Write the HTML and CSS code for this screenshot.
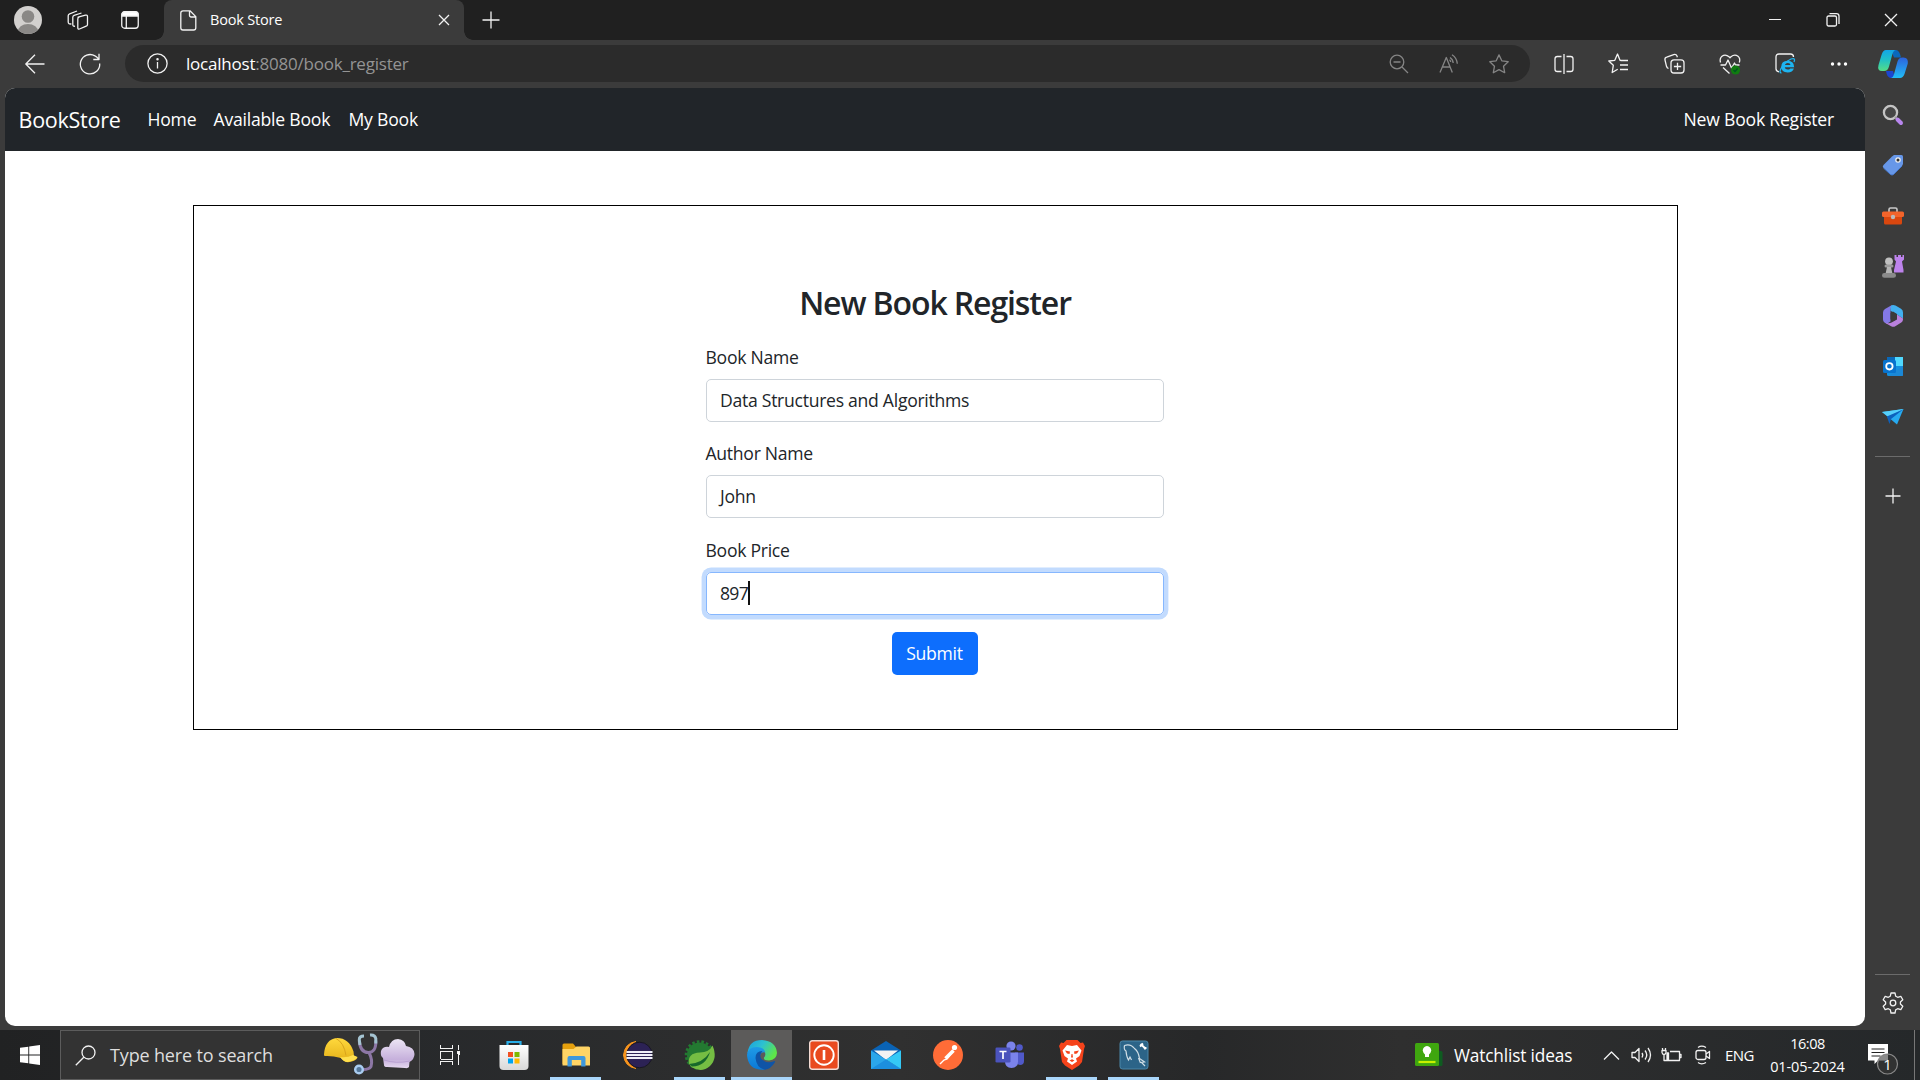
FILE: index.html
```html
<!DOCTYPE html>
<html lang="en">
<head>
<meta charset="utf-8">
<title>Book Store</title>
<link rel="stylesheet" href="styles.css">
</head>
<body>
<div class="desktop">
  <header class="tabstrip">
    <div class="strip-tools">
      <svg class="ico" width="28" height="28" viewBox="0 0 28 28"><defs><clipPath id="av"><circle cx="14" cy="14" r="14"/></clipPath></defs><g clip-path="url(#av)"><rect width="28" height="28" fill="#d2d0ce"/><circle cx="14" cy="10.5" r="6.3" fill="#8a8886"/><ellipse cx="14" cy="26" rx="10.3" ry="8" fill="#8a8886"/></g></svg>
      <svg class="ico line" width="22" height="22" viewBox="0 0 22 22"><path d="M11 8.200l7.500-2q2-.5 2 1.500v7.800q0 1.300-1.300 1.700l-6.700 2.800q-1.700.5-1.700-1.300v-8.700q0-1.400 1.200-1.800zM8 17.200q-2.200.4-2.200-1.500V8.300q0-1.500 1.300-2L14.500 4M4.400 14.900q-3.200.5-3.200-1.800V6.800q0-1.500 1.400-2L10 2"/></svg>
      <svg class="ico line" width="18" height="18" viewBox="0 0 18 18"><rect x=".75" y=".75" width="16.500" height="16.500" rx="3"/><path d="M1 3.500Q1 .8 4 .8h10q3 0 3 2.700V5H1z" fill="#fff"/><path d="M5.300 5v12"/></svg>
    </div>
    <div class="tab">
      <svg width="17" height="21" viewBox="0 0 17 21" class="line"><path d="M3 .8h7l5.800 5.800v11.200q0 2.200-2.200 2.200H3q-2.200 0-2.200-2.200V3Q.8.800 3 .8zM9.500 1v4.300q0 1.700 1.700 1.700h4.500"/></svg>
      <span class="tab-title">Book Store</span>
      <svg width="12" height="12" viewBox="0 0 12 12" class="line"><path d="M1 1l10 10M11 1L1 11"/></svg>
    </div>
    <svg class="newtab line" width="18" height="18" viewBox="0 0 18 18"><path d="M9 .5v17M.5 9h17"/></svg>
    <div class="window-controls">
      <svg width="14" height="14" viewBox="0 0 14 14" class="line sharp"><path d="M1 6.500h12"/></svg>
      <svg width="14" height="14" viewBox="0 0 14 14" class="line"><rect x="1" y="3" width="9.500" height="10" rx="1.500"/><path d="M3.500 .6h7q2.500 0 2.500 2.500V11"/></svg>
      <svg width="14" height="14" viewBox="0 0 14 14" class="line"><path d="M1 1l12 12M13 1L1 13"/></svg>
    </div>
  </header>

  <div class="toolbar">
    <svg class="nav-ico line" width="20" height="20" viewBox="0 0 20 20"><path d="M19.500 10H.8M10 .8L.8 10l9.200 9.200"/></svg>
    <svg class="nav-ico line" width="22" height="22" viewBox="0 0 22 22"><path d="M20.700 10.500A9.700 9.700 0 1 1 16 2.900q2 1 3.800 3.300M20 .800v5.700h-5.700"/></svg>
    <div class="address">
      <svg class="line" width="21" height="21" viewBox="0 0 21 21"><circle cx="10.500" cy="10.500" r="9.600"/><path d="M10.500 9v6.500"/><circle cx="10.500" cy="6.300" r=".6" fill="#fff"/></svg>
      <span class="url"><b>localhost</b>:8080/book_register</span>
      <div class="address-tools">
        <svg class="line dim" width="20" height="20" viewBox="0 0 20 20"><circle cx="8" cy="8" r="6.800"/><path d="M13 13l6 6M4.500 8h7"/></svg>
        <svg class="line dim" width="20" height="20" viewBox="0 0 20 20"><path d="M1 18.500L7.300 3.500l6 15M3.300 13h8M11 3.500q3 2 3.200 5.500M13 .8q4.800 3 5.300 9M10.500 5.800q1 .8 1.200 2.200"/></svg>
        <svg class="line dim" width="20" height="20" viewBox="0 0 20 20"><path d="M10 .9l2.800 5.900 6.400.9-4.700 4.500 1.200 6.500L10 15.600l-5.700 3.100 1.200-6.500L.8 7.700l6.400-.9z"/></svg>
      </div>
    </div>
    <div class="browser-tools">
      <svg class="line" width="20" height="20" viewBox="0 0 20 20"><path d="M7.500 2.500H3.300Q1 2.500 1 4.800v10.400q0 2.300 2.300 2.300h4.200M12.500 2.500h4.200q2.300 0 2.300 2.300v10.400q0 2.300-2.300 2.300h-4.200M10 0v20"/></svg>
      <svg class="line" width="21" height="21" viewBox="0 0 21 21"><path d="M13.300 7.500L12 7.300 9.500 1 6.800 7.300.8 8l4.500 4.300L4.200 19.500l5.500-3.200M13 7.500h7M12 12h8M12 16.500h8"/></svg>
      <svg class="line" width="21" height="21" viewBox="0 0 21 21"><rect x="7" y="6.800" width="13" height="13.200" rx="3"/><path d="M13.500 9.800v7.300M9.900 13.500h7.300M4.500 15.500q-1.500-.5-2-2.200L1 7q-.5-2.200 1.700-2.900l7-2.500q2.500-.6 3.300 1.500l.4 1.200"/></svg>
      <svg class="line" width="22" height="22" viewBox="0 0 22 22"><path d="M1.500 9.500Q.3 5.500 3 3.200q3.500-2.500 7 .6l1 1 1-1q3.500-3 7-.6 2.700 2.300 1.300 6.300M1.500 12h5l2.500-5 3.500 8 3-5 1 2h4M4 14.500l6.500 6"/><circle cx="16.500" cy="17" r="4.600" fill="#107c10" stroke="none"/><path d="M14.500 17l1.500 1.500 2.600-3" stroke="#052"/></svg>
      <svg width="21" height="21" viewBox="0 0 21 21"><path d="M4 18.800q-3-.4-3-3V4q0-3 3-3h11.500q3 0 3 3" class="line"/><path d="M19.200 14.300h-9.400q.3 2.300 2.800 2.300 1.800 0 2.600-1.200h3.700q-1.300 4-6.300 4-6.300 0-6.300-5.700 0-6 6.300-6 6.600 0 6.600 6.600zm-9.300-2.400h5.600q-.2-1.900-2.700-1.900-2.400 0-2.900 1.900z" fill="#1eb4f0"/><path d="M6.500 19.800Q3.800 20 6 15.500q3-6 10-9.500 5-1.500 3 3" fill="none" stroke="#1eb4f0" stroke-width="1.300"/></svg>
      <svg width="18" height="4" viewBox="0 0 18 4"><g fill="#fff"><circle cx="2.500" cy="2" r="1.700"/><circle cx="9" cy="2" r="1.700"/><circle cx="15.500" cy="2" r="1.700"/></g></svg>
    </div>
    <svg class="copilot" width="30" height="28" viewBox="0 0 30 28"><defs><linearGradient id="c1" x1="0" y1="0" x2="0" y2="1"><stop offset="0" stop-color="#13a5e8"/><stop offset=".45" stop-color="#1fbfc8"/><stop offset="1" stop-color="#55dd86"/></linearGradient><linearGradient id="c2" x1="0" y1="0" x2="0" y2="1"><stop offset="0" stop-color="#2c62dd"/><stop offset="1" stop-color="#22bdf5"/></linearGradient></defs><path d="M13 0h5q3.500 0 5 7.500h-7z" fill="#0a68bc"/><path d="M8 21h7l2 7h-4q-4 0-5-7z" fill="#1b46cf"/><path d="M8 0h10q-2.500 0-3.700 4.500L11 16.500Q9.800 21 6 21H4q-5 0-3.500-6L3.500 5Q5 0 8 0z" fill="url(#c1)"/><path d="M22 28H12.500q2.500 0 3.700-4.500l3.300-12q1.200-4 5-4h1q5 0 4.300 6L26.500 24q-1.500 4-4.500 4z" fill="url(#c2)"/></svg>
  </div>

  <div class="middle">
    <main class="page">
      <nav class="navbar">
        <a class="brand">BookStore</a>
        <div class="links"><a class="l-home">Home</a><a class="l-avail">Available Book</a><a class="l-my">My Book</a></div>
        <a class="l-new">New Book Register</a>
      </nav>
      <section class="card">
        <h2 class="title">New Book Register</h2>
        <form class="form">
          <div class="field"><label>Book Name</label><div class="input">Data Structures and Algorithms</div></div>
          <div class="field"><label>Author Name</label><div class="input">John</div></div>
          <div class="field"><label>Book Price</label><div class="input focus">897<i class="caret"></i></div></div>
          <div class="submit">Submit</div>
        </form>
      </section>
    </main>

    <aside class="sidebar">
      <div class="apps">
        <svg width="22" height="22" viewBox="0 0 22 22"><circle cx="8.500" cy="8.500" r="6.600" fill="#454545" stroke="#c4c4c4" stroke-width="2.300"/><path d="M13 13l2 2" stroke="#999" stroke-width="2"/><path d="M15.500 15.500l3.500 3.500" stroke="#b886ee" stroke-width="4" stroke-linecap="round"/></svg>
        <svg width="22" height="22" viewBox="0 0 22 22"><path d="M10 2.500L12 1h7.500Q21 1 21 2.500V10l-1 2-8.500 8.500q-1.500 1-3 0L1.500 14q-1.500-1.500 0-3z" fill="#6797e8"/><path d="M1.500 14l7 6.500q1.500 1 3 0L20 12" fill="none" stroke="#4779cd" stroke-width="1"/><circle cx="16" cy="6" r="2.800" fill="#eee"/><circle cx="16" cy="6" r="1.500" fill="#333"/></svg>
        <svg width="22" height="22" viewBox="0 0 22 22"><path d="M7 7V4.500Q7 3 8.500 3h5Q15 3 15 4.500V7" fill="none" stroke="#c9c9c9" stroke-width="1.600"/><path d="M2 10h18v8q0 1.500-1.500 1.500h-15Q2 19.500 2 18z" fill="#d9470f"/><rect y="6.500" width="22" height="5.500" rx="1.500" fill="#f2642b"/><circle cx="11" cy="12" r="2.200" fill="#bbb"/></svg>
        <svg width="22" height="23" viewBox="0 0 22 23"><path d="M12.500 0h2v2h1.500V0h3v2h1.500V0h1.500v4.500L20 6.500 21.500 15v2.500H12V15l2-8.500-1.500-2z" fill="#bd83ec"/><circle cx="7" cy="6.300" r="3.900" fill="#bfbfbf"/><rect x="2.500" y="9.500" width="9" height="3" rx="1.500" fill="#9a9a9a"/><path d="M5 12h4l1.500 7h-7z" fill="#b4b4b4"/><rect y="18" width="14" height="4.800" rx="2.400" fill="#8a8a8a"/></svg>
        <svg width="22" height="22" viewBox="0 0 22 22"><path d="M10 0L3 4Q1 5.200 1 7.500v7q0 2 1.500 3L5 18.800l3.500-2.300V5.500Q8.500 2 10 0z" fill="#8479e6"/><path d="M9.500 .3q2-.8 4 .3l5.500 3.200q2 1.200 2 3.700v6l-6-4-6.500-3.800Q8 2 9.500 .3z" fill="#42b0f0"/><path d="M15 9.500l6 4v1q0 2-1.700 3l-6 3.700q-2 1.200-4.200 0L2.500 17.500q6 1.500 8-.5l4.500-2.500z" fill="#b981dd"/><path d="M8.500 8l2.500-1.500L15 9v4.500L11.500 16l-3-1.800z" fill="#3b3b3b"/></svg>
        <svg width="22" height="21" viewBox="0 0 22 21"><rect x="5" y="1" width="16" height="19" rx="1.500" fill="#1490df"/><path d="M12 1h9v9h-9z" fill="#50d9ff"/><path d="M5 1h8v5H5z" fill="#0a68b8"/><path d="M12 16l9-6v9q0 1-1 1H7z" fill="#1b88d6"/><rect x="1" y="4" width="13" height="13" rx="1.500" fill="#0873ce"/><circle cx="7.400" cy="10.300" r="3.200" fill="none" stroke="#fff" stroke-width="1.800"/></svg>
        <svg width="22" height="18" viewBox="0 0 22 18"><path d="M0 4L21.500 1 15 16.500z" fill="#27aaf0"/><path d="M0 4L21.500 1 6.500 9z" fill="#56d0fb"/><path d="M4.800 8.500L21 1.500 9 11l-1.500 5z" fill="#0d61bd"/></svg>
      </div>
      <hr class="rule">
      <svg class="plus line" width="16" height="16" viewBox="0 0 16 16"><path d="M8 .5v15M.5 8h15"/></svg>
      <hr class="rule low">
      <svg class="gear line" width="22" height="22" viewBox="0 0 22 22"><circle cx="11" cy="11" r="2.800"/><path d="M9 1h4l.7 3.200 2 1.100 3.100-1 2 3.500-2.400 2.200v2l2.400 2.200-2 3.500-3.100-1-2 1.100L13 21H9l-.7-3.200-2-1.100-3.100 1-2-3.500L3.600 12v-2L1.200 7.800l2-3.500 3.100 1 2-1.100z"/></svg>
    </aside>
  </div>

  <footer class="taskbar">
    <div class="start"><svg width="20" height="20" viewBox="0 0 20 20"><path d="M0 2.800L8.300 1.700v7.800H0zM9.200 1.500L20 0v9.500H9.200zM0 10.400h8.300v7.900L0 17.200zM9.200 10.400H20V20L9.200 18.400z" fill="#fff"/></svg></div>
    <div class="search">
      <svg class="line" width="21" height="21" viewBox="0 0 21 21"><circle cx="13.500" cy="7.500" r="6.500"/><path d="M8.800 12.200L.8 20.200"/></svg>
      <span class="search-text">Type here to search</span>
      <svg class="art" width="92" height="42" viewBox="0 0 92 42"><defs><linearGradient id="h" x1="0" y1="0" x2="0" y2="1"><stop offset="0" stop-color="#ffd93d"/><stop offset="1" stop-color="#e4b018"/></linearGradient><linearGradient id="ch" x1="0" y1="0" x2="0" y2="1"><stop offset="0" stop-color="#ece5f4"/><stop offset=".7" stop-color="#c6b0dc"/><stop offset="1" stop-color="#e6d8f0"/></linearGradient></defs>
        <path d="M1 20.500Q2 5 14 4q12 0 16.500 13.500L31 22l3.500 1.500q-1 3-8 4.500-5 1-8.500-4Q9 21.500 2 22q-1.500-.500-1-1.500z" fill="url(#h)"/><path d="M13 4.500q8 4 10 17" fill="none" stroke="#d9a41c" stroke-width="1"/><path d="M17 23q7 1 13-2l4.500 2q-2 4-10 5-4 0-7.500-5z" fill="#ffe04f"/>
        <path d="M36.300 7q1 11.500 9 11.500t7.500-12M46 18.500q4 8 2 14-2 3.500-10 3" fill="none" stroke="#8d77a6" stroke-width="3"/><path d="M41 2q-5 0-4.700 4l.7 5M47 1q5-.5 5.800 3.500v5" fill="none" stroke="#a5c4d2" stroke-width="3"/><circle cx="36" cy="35.500" r="3.800" fill="#54779a" stroke="#a9ccf0" stroke-width="2.500"/>
        <path d="M61 31l-1-7q-3-2-2-7 2-5 8-4 2-8 9-8 7 1 8 7 8 1 8.500 8 0 5-5 8l-.5 5q-1 1.500-4 1l-18-1q-3 0-3-2z" fill="url(#ch)"/><path d="M61 26q12 4 26 1" fill="none" stroke="#b49ccf" stroke-width=".9"/></svg>
    </div>
    <div class="task"><svg class="line sharp" width="20" height="20" viewBox="0 0 20 20"><path d="M.5 0v3.500h12V0M.5 20v-3.500h12V20M.5 6h12v8H.5zM18.500 0v5M18.500 10v10"/><rect x="17.500" y="6" width="2" height="3" fill="#fff"/></svg></div>
    <div class="apps-row">
      <div class="app"><svg width="30" height="30" viewBox="0 0 30 30"><defs><linearGradient id="st" x1="0" y1="0" x2="0" y2="1"><stop offset="0" stop-color="#fff"/><stop offset="1" stop-color="#d8d8d8"/></linearGradient></defs><path d="M8.500 7V2h13v5" fill="none" stroke="#2aaee8" stroke-width="2.200"/><path d="M.5 5h29v21q0 4-4 4h-21q-4 0-4-4z" fill="url(#st)"/><path d="M9 12h5v5H9z" fill="#f25022"/><path d="M15.500 12h5v5h-5z" fill="#7fba00"/><path d="M9 18.500h5v5H9z" fill="#00a4ef"/><path d="M15.500 18.500h5v5h-5z" fill="#ffb900"/></svg></div>
      <div class="app open"><svg width="30" height="30" viewBox="0 0 30 30"><path d="M1.500 5Q1.500 3.500 3 3.500h9l3 3.500h12q2 0 2 2v15H1.500z" fill="#e5a00d"/><path d="M1.500 9h11l3-2.500h12q1.500 0 1.500 1.500v17.500H1.500z" fill="#ffd465"/><path d="M6.500 26.500V18q0-2 2-2h14q2 0 2 2v8.500h-4.300V20h-9.400v6.500z" fill="#3f98dc"/></svg></div>
      <div class="app"><svg width="31" height="30" viewBox="0 0 31 30"><path d="M14 1.500Q3 3 1.500 15 2.500 26.500 14 28.500 6 25 5 15q1-10 9-13.500z" fill="#f8951d" stroke="#f8951d"/><circle cx="17.500" cy="15" r="12.800" fill="#2c2255" stroke="#191722"/><path d="M4.500 12h26M4.500 15h26M4.500 18h26" stroke="#eeeef7" stroke-width="1.900"/></svg></div>
      <div class="app open"><svg width="30" height="30" viewBox="0 0 30 30"><circle cx="14.500" cy="15" r="12.600" fill="#237a31"/><circle cx="14.500" cy="15" r="13.500" fill="none" stroke="#237a31" stroke-width="2.600" stroke-dasharray="2.600 2.050"/><path d="M27.500 5.500Q33 18 25 26q-8 7-18 1.500L4 24Q2 13 15 12.500q9 0 12.500-7z" fill="#75bd43"/><path d="M4 24q14-1 21-12-4 14-18 14.500z" fill="#17682b"/></svg></div>
      <div class="app open active"><svg width="30" height="30" viewBox="0 0 30 30"><defs><linearGradient id="e1" x1="0" y1="0" x2="1" y2=".5"><stop offset="0" stop-color="#1a9fe0"/><stop offset=".5" stop-color="#2dc1d0"/><stop offset="1" stop-color="#5ee648"/></linearGradient><linearGradient id="e2" x1="0" y1="0" x2="0" y2="1"><stop offset="0" stop-color="#1f9be6"/><stop offset="1" stop-color="#0b78d6"/></linearGradient></defs><path d="M.5 13Q2 0 15 0q14 1 15 13-.5 7-8 7.500-6 0-5-3 2-2 1-5-2-4-9-4-6 1-8.500 4.500z" fill="url(#e1)"/><path d="M0 15q1-8 9.500-8 7.500 0 8.800 5.500-4-1-5.300 3-2 8 5 14.200Q1 31 0 15z" fill="url(#e2)"/><path d="M8.500 18q0-7 7-7-4 5-.5 8.500Q20 24 27.500 21q1 0 .3 1.500-4 6.500-9.800 7.200Q9.500 28 8.500 18z" fill="#0f54a6"/></svg></div>
      <div class="app"><svg width="30" height="30" viewBox="0 0 30 30"><rect x=".7" y=".7" width="28.600" height="28.600" rx="2.500" fill="#e94a1f" stroke="#f4dcd5" stroke-width="1.400"/><circle cx="15" cy="15" r="9.700" fill="none" stroke="#fff" stroke-width="1.900"/><path d="M15 10v10" stroke="#fff" stroke-width="2.600"/></svg></div>
      <div class="app"><svg width="30" height="30" viewBox="0 0 30 30"><path d="M0 10.500L15 1l15 9.500v9H0z" fill="#0a63b5"/><path d="M3 10.500h24L15 20z" fill="#f3f3f3"/><path d="M0 10.500l30 18V29H0z" fill="#2ba6ea"/><path d="M30 10.500L15 19.500 30 29z" fill="#35c9f5"/><path d="M0 29l15-9.500L30 29z" fill="#1c8fdf"/></svg></div>
      <div class="app"><svg width="30" height="30" viewBox="0 0 30 30"><circle cx="15" cy="15" r="15" fill="#ff6c37"/><circle cx="21.500" cy="7.500" r="2.600" fill="#fff"/><path d="M20.500 11l-6.500 8-3 1-4 4" fill="none" stroke="#fff" stroke-width="1.400"/><path d="M20.500 10.500l-8 8" stroke="#fff" stroke-width="3.600"/></svg></div>
      <div class="app"><svg width="30" height="30" viewBox="0 0 30 30"><circle cx="24.500" cy="7.500" r="3.300" fill="#5059c9"/><path d="M20 12.500h9v8.500q0 4-4 4-5-1-5-4z" fill="#5059c9"/><circle cx="16" cy="6" r="4.600" fill="#7b83eb"/><path d="M10 12.500h13v9q0 6.500-6.500 6.500T10 21.500z" fill="#7b83eb"/><rect x=".5" y="7.500" width="15" height="15" rx="1.300" fill="#4b53bc"/><path d="M4.500 11.500h7M8 11.500V19" stroke="#fff" stroke-width="1.700"/></svg></div>
      <div class="app open"><svg width="30" height="30" viewBox="0 0 30 30"><path d="M9.500 0h11l3 3 2.500-.5L28 6l-1 3-2 13-3 3.500-7 4.500-7-4.500L5 22 3 9 2 6l2-3.500L6.500 3z" fill="#f5431b"/><path d="M10 5l5 1 5-1 4.500 5.500-2 5.500-3.500 2.500 1 3L15 25l-5-3.500 1-3L7.500 16l-2-5.500z" fill="#fff"/><path d="M8 10.500l5 1-.5 2.500-2.500-.5zM22 10.500l-5 1 .5 2.500 2.500-.5zM12.500 20.500l2.500-1.300 2.500 1.300L15 22zM14.500 14h1l.5 3.500h-2z" fill="#f5431b"/></svg></div>
      <div class="app open"><svg width="30" height="30" viewBox="0 0 30 30"><rect x="1" y="1" width="28" height="28" rx="2.500" fill="#2c6488" stroke="#4b87a9"/><path d="M5.500 5.500q6-2 10 3 4 3 5 10l5 3.500-3 .5 3.500 3.500M5.500 5.500q-1 4 1.500 5.500.500 6 2.500 9l1.500-3 1.500 3M19.500 18l2 5" fill="none" stroke="#cfdde5" stroke-width="1.200"/><path d="M21.500 4l5.500 5M21 6.500l3-3M25 9l2.500-1.500" stroke="#fff" stroke-width="1.900"/></svg></div>
    </div>
    <div class="tray">
      <svg class="watch-ico" width="28" height="24" viewBox="0 0 28 24"><rect x="14" y="8" width="13.500" height="15" rx="1.500" fill="#0e5c20"/><rect x="0" y="0" width="24" height="23" rx="1.500" fill="#3fa60f"/><path d="M12 3q-4 .5-4.300 4.500.3 2 2.300 4V14h4v-2.500q2-2 2.300-4Q16 3.500 12 3z" fill="#fff"/><path d="M3.500 19h17" stroke="#c8f000" stroke-width="2.200"/></svg>
      <span class="watch">Watchlist ideas</span>
      <svg class="t1 line" width="17" height="17" viewBox="0 0 17 17"><path d="M1 12.500L8.500 5l7.500 7.500"/></svg>
      <svg class="t2 line" width="21" height="18" viewBox="0 0 21 18"><path d="M1 6.500h3l4-4v13l-4-4H1zM11 7q1.500 2 0 4.500M14 4.500q3.500 4.500 0 9M17 2q5 7 0 14"/></svg>
      <svg class="t3 line" width="21" height="16" viewBox="0 0 21 16"><path d="M5 13.500h13.500V4.500H9M18.500 7.500H20v3h-1.500M3 8v5.500h4M1.500 1v2M4.500 1v2M1 3.500h4v2q-.3 2-2 2t-2-2z"/><path d="M6 6h1.500v7H6z" fill="#fff"/></svg>
      <svg class="t4 line" width="16" height="20" viewBox="0 0 16 20"><rect x="1" y="5.500" width="10" height="9" rx="2"/><path d="M11 9l3.500-2.500v7L11 11M3 2.500q3.500-2.700 8 0M3 17.500q3.500 2.700 8 0"/></svg>
      <span class="lang">ENG</span>
      <div class="clock"><span class="time">16:08</span><span class="date">01-05-2024</span></div>
      <svg class="notif" width="31" height="32" viewBox="0 0 31 32"><path d="M0 0h20v16.500H10L6.500 20v-3.500H0z" fill="#fff"/><path d="M3.500 5h13M3.500 8.500h13M3.500 12h9" stroke="#222" stroke-width="1.200"/><circle cx="19.500" cy="20" r="10" fill="#333" fill-opacity=".9" stroke="#8a8a8a" stroke-width="1.200"/><path d="M10 18q2-8 10-7.500v6H11z" fill="#8a8a8a"/><text x="19.500" y="25.500" text-anchor="middle" class="badge">1</text></svg>
      <div class="show-desktop"></div>
    </div>
  </footer>
</div>
</body>
</html>
```
FILE: styles.css
```css
* { box-sizing: border-box; }
body { margin: 0; font-family: "Open Sans", "Noto Sans", sans-serif; color: #fff; background: #3b3b3b; overflow: hidden; }
svg { display: block; flex: none; overflow: visible; }
span, a, label { white-space: nowrap; }
.line { fill: none; stroke: #f2f2f2; stroke-width: 1.3; stroke-linejoin: round; }
.dim { stroke: #858585; }
.sharp { stroke-width: 1; shape-rendering: crispEdges; }
.desktop { width: 1920px; height: 1080px; display: flex; flex-direction: column; }

/* tab strip */
.tabstrip { height: 40px; background: #202020; display: flex; align-items: center; }
.strip-tools { width: 164px; padding-left: 14px; display: flex; align-items: center; }
.strip-tools .ico:nth-child(2) { margin-left: 25px; }
.strip-tools .ico:nth-child(3) { margin-left: 32px; }
.tab { position: relative; width: 300px; height: 40px; padding: 0 14px 0 16px; display: flex; align-items: center; background: #3b3b3b; border-radius: 8px 8px 0 0; }
.tab::before, .tab::after { content: ""; position: absolute; bottom: 0; width: 9px; height: 9px; }
.tab::before { left: -9px; background: radial-gradient(circle at 0 0, #202020 8.500px, #3b3b3b 9px); }
.tab::after { right: -9px; background: radial-gradient(circle at 100% 0, #202020 8.500px, #3b3b3b 9px); }
.tab-title { flex: 1; margin-left: 13px; padding-bottom: 1px; font-size: 14.500px; letter-spacing: -.2px; }
.newtab { margin-left: 18px; }
.window-controls { margin-left: auto; padding-right: 22px; display: flex; gap: 44px; }

/* toolbar */
.toolbar { height: 48px; display: flex; align-items: center; padding: 0 12px 1px 25px; }
.nav-ico + .nav-ico { margin-left: 34px; }
.address { width: 1405px; height: 37px; margin-left: 24px; padding: 0 21px 0 22px; border-radius: 19px; background: #2b2b2b; display: flex; align-items: center; }
.url { margin-left: 18px; font-size: 17px; letter-spacing: -.22px; color: #949494; padding-bottom: 1px; }
.url b { font-weight: 400; color: #fff; }
.address-tools { margin-left: auto; display: flex; gap: 30px; }
.browser-tools { margin-left: 24px; display: flex; align-items: center; gap: 34.300px; }
.copilot { margin-left: auto; }

/* page */
.middle { height: 942px; display: flex; }
.page { width: 1860px; height: 938px; margin-left: 5px; background: #fff; border-radius: 10px; overflow: hidden; color: #212529; font-size: 17.600px; letter-spacing: -.28px; }
.navbar { height: 63px; background: #212529; color: #fff; display: flex; align-items: center; padding: 0 31px 1px 13.500px; letter-spacing: -.22px; }
.brand { font-size: 21.500px; letter-spacing: -.25px; width: 129px; }
.links { display: flex; }
.l-home { width: 66px; }
.l-avail { width: 135px; }
.l-new { margin-left: auto; }
.card { width: 1485px; height: 525px; margin: 54px 0 0 188px; border: 1px solid #000; display: flex; flex-direction: column; align-items: center; padding: 76px 1px 0 0; }
.title { margin: 0 0 19px; font-size: 32px; line-height: 42px; font-weight: 600; letter-spacing: -1.120px; white-space: nowrap; }
.form { width: 458px; margin-left: -1px; display: flex; flex-direction: column; }
.field { height: 96.600px; }
.field label { display: block; line-height: 26.400px; padding-top: .5px; margin-bottom: 8.800px; }
.input { height: 43px; line-height: 41px; border: 1px solid #ced4da; border-radius: 5px; padding-left: 13.500px; display: flex; align-items: center; }
.focus { border-color: #86b7fe; box-shadow: 0 0 0 4.400px #c2dbfe; letter-spacing: -.7px; }
.caret { width: 2px; height: 24px; background: #111; }
.submit { align-self: center; margin-top: -1px; width: 86px; height: 43px; border-radius: 5px; background: #0d6efd; color: #fff; display: flex; align-items: center; justify-content: center; }

/* sidebar */
.sidebar { width: 55px; padding-top: 2px; display: flex; flex-direction: column; align-items: center; }
.apps { display: grid; grid-auto-rows: 50.300px; place-items: center; }
.rule { width: 35px; height: 1px; border: 0; background: #6b6b6b; margin: 14px 0 0; }
.plus { margin-top: 31px; }
.low { margin-top: 470px; }
.gear { margin-top: 17px; }

/* taskbar */
.taskbar { height: 50px; display: flex; background: linear-gradient(90deg, #212223 0, #27292b 400px, #303030 900px, #272829 1200px, #2f2f2f 1400px, #25282a 1920px); }
.start { width: 60px; display: grid; place-items: center; }
.search { width: 360px; background: #333; border: 1px solid #5c5c5c; display: flex; align-items: center; padding: 0 4px 0 14px; }
.search-text { margin-left: 14px; font-size: 18px; letter-spacing: -.15px; color: #dedede; }
.art { margin-left: auto; }
.task { width: 62px; padding-right: 2px; display: grid; place-items: center; }
.apps-row { display: flex; margin-left: .6px; }
.app { width: 62px; display: grid; place-items: center; }
.open { background: linear-gradient(#a9d6fb, #a9d6fb) 50% 100% / 51px 3px no-repeat; }
.active { background: linear-gradient(#a9d6fb, #a9d6fb) 50% 100% / 61px 3px no-repeat, linear-gradient(#5c5b5a, #5c5b5a) 50% 0 / 61px 50px no-repeat; }
.tray { flex: 1; display: flex; align-items: center; }
.watch-ico { margin-left: 250.400px; }
.watch { width: 149px; margin-left: 11px; font-size: 17.300px; letter-spacing: -.16px; }
.t1 { margin-right: 11px; }
.t2 { margin-right: 9px; }
.t3 { margin-right: 13px; }
.t4 { margin-right: 14px; }
.lang { width: 40px; font-size: 15px; letter-spacing: -.6px; }
.clock { width: 85px; display: flex; flex-direction: column; align-items: center; font-size: 14.500px; letter-spacing: -.1px; line-height: 23px; }
.time { letter-spacing: -.5px; }
.notif { margin: 10px 0 0 18px; }
.badge { font-size: 15px; fill: #fff; }
.show-desktop { width: 6px; height: 50px; margin-left: auto; border-left: 1px solid #777; }
```
